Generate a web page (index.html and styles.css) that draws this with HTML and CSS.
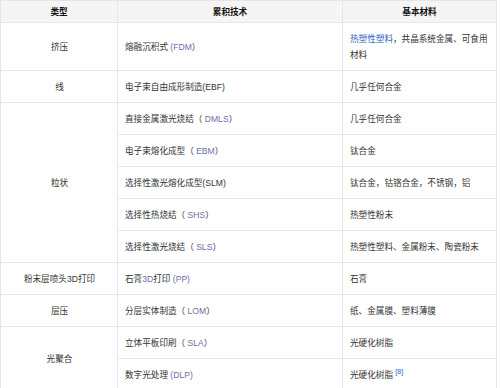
FILE: index.html
```html
<!DOCTYPE html>
<html>
<head>
<meta charset="utf-8">
<link rel="stylesheet" href="styles.css">
</head>
<body>
<table class="tech">
  <colgroup>
    <col class="c1"><col class="c2"><col class="c3">
  </colgroup>
  <thead>
    <tr><th>类型</th><th>累积技术</th><th>基本材料</th></tr>
  </thead>
  <tbody>
    <tr><td class="type">挤压</td><td>熔融沉积式 <span class="ab">(FDM</span>）</td><td><span class="link">热塑性塑料</span>，共晶系统金属、可食用材料</td></tr>
    <tr><td class="type">线</td><td>电子束自由成形制造(EBF)</td><td>几乎任何合金</td></tr>
    <tr><td class="type" rowspan="5">粒状</td><td>直接金属激光烧结（ <span class="ab">DMLS</span>）</td><td>几乎任何合金</td></tr>
    <tr><td>电子束熔化成型（ <span class="ab">EBM</span>）</td><td>钛合金</td></tr>
    <tr><td>选择性激光熔化成型(SLM)</td><td>钛合金，钴铬合金，不锈钢，铝</td></tr>
    <tr><td>选择性热烧结（ <span class="ab">SHS</span>）</td><td>热塑性粉末</td></tr>
    <tr><td>选择性激光烧结（ <span class="ab">SLS</span>）</td><td>热塑性塑料、金属粉末、陶瓷粉末</td></tr>
    <tr><td class="type">粉末层喷头3D打印</td><td>石膏<span class="ab">3D</span>打印 <span class="ab">(PP)</span></td><td>石膏</td></tr>
    <tr><td class="type">层压</td><td>分层实体制造（ <span class="ab">LOM</span>）</td><td>纸、金属膜、塑料薄膜</td></tr>
    <tr><td class="type" rowspan="2">光聚合</td><td>立体平板印刷（ <span class="ab">SLA</span>）</td><td>光硬化树脂</td></tr>
    <tr><td>数字光处理 <span class="ab">(DLP)</span></td><td>光硬化树脂 <sup class="ref">[8]</sup></td></tr>
  </tbody>
</table>
</body>
</html>
```
FILE: styles.css
```css
html, body {
  margin: 0;
  padding: 0;
  background: #fff;
}
body {
  font-family: "Liberation Sans", "Noto Sans CJK SC", sans-serif;
  font-size: 8.6px;
  color: #333;
}
.tech {
  border-collapse: collapse;
  width: 496px;
  table-layout: fixed;
}
.c1 { width: 117px; }
.c2 { width: 225px; }
.c3 { width: 154px; }
.tech th, .tech td {
  border: 1px solid #e6e6e6;
  line-height: 16px;
}
.tech th {
  background: #f5f5f5;
  color: #111;
  font-weight: bold;
  height: 22px;
  padding: 0 7px;
  box-sizing: border-box;
  text-align: center;
}
.tech td {
  padding: 8px 6px 7px 7px;
  text-align: left;
  vertical-align: middle;
}
.tech td.type {
  text-align: center;
}
.ab {
  color: #6e6ea8;
}
.link {
  color: #2f63c4;
}
.ref {
  color: #2f63c4;
  font-size: 7px;
  line-height: 0;
  vertical-align: 4px;
}
```
